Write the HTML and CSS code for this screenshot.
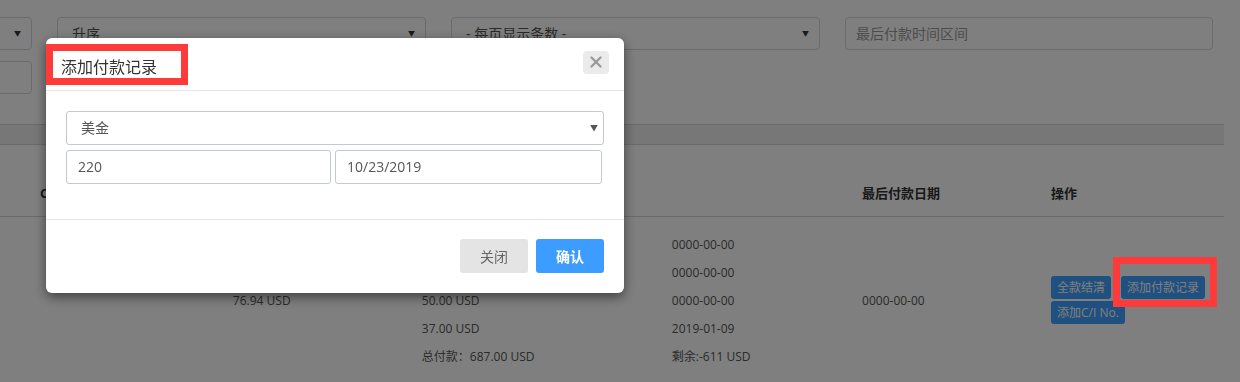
FILE: index.html
```html
<!DOCTYPE html>
<html lang="zh-CN">
<head>
    <meta charset="UTF-8">
    <title>付款记录</title>
    <link rel="stylesheet" href="styles.css">
</head>
<body>
    <div class="page">
        <div class="filters">
            <div class="field select"><span></span><i class="caret">▼</i></div>
            <div class="field select"><span>升序</span><i class="caret">▼</i></div>
            <div class="field select"><span>- 每页显示条数 -</span><i class="caret">▼</i></div>
            <div class="field"><span class="placeholder">最后付款时间区间</span></div>
        </div>
        <div class="filters second">
            <div class="field"></div>
        </div>

        <div class="band"></div>

        <table class="list">
            <thead>
                <tr>
                    <th class="c-first"></th>
                    <th class="c-ci">C/I No.</th>
                    <th class="c-total">合同金额</th>
                    <th class="c-pay">付款记录</th>
                    <th class="c-last">最后付款日期</th>
                    <th class="c-op">操作</th>
                </tr>
            </thead>
            <tbody>
                <tr>
                    <td></td>
                    <td></td>
                    <td>76.94 USD</td>
                    <td>
                        <div class="pays">
                            <span>100.00 USD</span><span>0000-00-00</span>
                            <span>500.00 USD</span><span>0000-00-00</span>
                            <span>50.00 USD</span><span>0000-00-00</span>
                            <span>37.00 USD</span><span>2019-01-09</span>
                            <span>总付款：687.00 USD</span><span>剩余:-611 USD</span>
                        </div>
                    </td>
                    <td>0000-00-00</td>
                    <td>
                        <div class="ops">
                            <button class="btn-xs">全款结清</button>
                            <button class="btn-xs">添加付款记录</button>
                            <button class="btn-xs">添加C/I No.</button>
                        </div>
                    </td>
                </tr>
            </tbody>
        </table>
    </div>

    <div class="backdrop"></div>
    <div class="mark mark-op"></div>

    <div class="modal">
        <div class="modal-header">
            <h4 class="modal-title">添加付款记录</h4>
            <button class="close" aria-label="关闭">
                <svg width="12" height="12" viewBox="0 0 12 12"><path d="M1.5 1.5 L10.5 10.5 M10.5 1.5 L1.5 10.5" stroke="#999" stroke-width="2.2" stroke-linecap="round"/></svg>
            </button>
            <div class="mark mark-title"></div>
        </div>
        <div class="modal-body">
            <div class="input select"><span>美金</span><i class="caret">▼</i></div>
            <div class="input-row">
                <div class="input">220</div>
                <div class="input">10/23/2019</div>
            </div>
        </div>
        <div class="modal-footer">
            <button class="btn btn-default">关闭</button>
            <button class="btn btn-primary">确认</button>
        </div>
    </div>
</body>
</html>
```

FILE: styles.css
```css
body {
    margin: 0;
    font-family: 'Open Sans', 'Noto Sans CJK SC', sans-serif;
    color: #555;
    background: #fff;
    overflow: hidden;
    height: 382px;
}

.page {
    margin-left: -336px;
    width: 1560px;
    padding-top: 17px;
}

.filters {
    display: grid;
    grid-template-columns: 368px 369px 369px 368px;
    column-gap: 25px;
}

.filters.second {
    margin-top: 11px;
}

.field {
    height: 33px;
    box-sizing: border-box;
    border: 1px solid #d2d6de;
    border-radius: 4px;
    padding: 0 14px;
    font-size: 14px;
    line-height: 31px;
    color: #555;
    display: flex;
    justify-content: space-between;
    align-items: center;
}

.field span {
    line-height: 31px;
}

.placeholder {
    color: #999;
    margin-left: -4px;
}

.caret {
    font-style: normal;
    font-size: 7px;
    line-height: 10px;
    color: #333;
    margin-right: -4px;
}

.band {
    margin-top: 30px;
    height: 19px;
    background: #eeeeee;
    border-top: 1px solid #d6d6d6;
    border-bottom: 1px solid #d6d6d6;
}

.list {
    width: 1560px;
    border-collapse: collapse;
    font-size: 12px;
}

.list th {
    text-align: left;
    font-size: 13px;
    color: #333;
    font-weight: bold;
    padding: 38px 8px 13px;
    line-height: 20px;
    border-bottom: 1px solid #d6d6d6;
    white-space: nowrap;
}

.list td {
    padding: 13px 8px;
    vertical-align: middle;
}

.c-first { width: 350px; }
.c-ci { width: 176px; }
.c-total { width: 172px; }
.c-pay { width: 422px; }
.c-last { width: 172px; }
.c-op { width: 172px; }

.list tbody tr td:last-child,
.list thead tr th:last-child {
    padding-right: 0;
}

.pays {
    display: grid;
    grid-template-columns: 250px auto;
    grid-auto-rows: 28px;
    align-items: center;
}

.ops {
    display: flex;
    flex-wrap: wrap;
    gap: 2px 10px;
    width: 172px;
}

.btn-xs {
    font-family: inherit;
    font-size: 12px;
    line-height: 17px;
    padding: 3px 6px;
    border: none;
    border-radius: 3px;
    background: #3ea0ff;
    color: #fff;
}

.backdrop {
    position: fixed;
    inset: 0;
    background: rgba(0, 0, 0, 0.5);
}

.mark {
    position: absolute;
    box-sizing: border-box;
    border: 7px solid #ff3a3a;
}

.mark-op {
    left: 1113px;
    top: 257px;
    width: 104px;
    height: 50px;
}

.mark-title {
    left: 0;
    top: 6px;
    width: 142px;
    height: 41px;
}

.modal {
    position: fixed;
    left: 46px;
    top: 38px;
    width: 578px;
    background: #fff;
    border-radius: 6px;
    box-shadow: 0 4px 12px rgba(0, 0, 0, 0.5);
    color: #555;
}

.modal-header {
    position: relative;
    height: 52px;
    border-bottom: 1px solid #e5e5e5;
    padding: 0 15px;
    display: flex;
    align-items: center;
    justify-content: space-between;
}

.modal-title {
    margin: 4px 0 0;
    font-size: 16px;
    font-weight: normal;
    color: #333;
}

.close {
    width: 26px;
    height: 23px;
    border: none;
    border-radius: 4px;
    background: #ebebeb;
    padding: 0;
    margin-top: -4px;
    display: flex;
    align-items: center;
    justify-content: center;
}

.modal-body {
    padding: 20px 20px 20px;
    font-size: 14px;
}

.input {
    height: 34px;
    box-sizing: border-box;
    border: 1px solid #c3c9d0;
    border-radius: 3px;
    padding: 0 11px;
    line-height: 32px;
    color: #555;
    margin-bottom: 5px;
}

.input.select {
    display: flex;
    justify-content: space-between;
    align-items: center;
    padding-left: 14px;
}

.input.select .caret {
    margin-right: -6px;
    color: #555;
    font-size: 8px;
}

.input-row {
    display: grid;
    grid-template-columns: 265px 267px;
    column-gap: 4px;
}

.input-row .input {
    margin-bottom: 15px;
}

.modal-footer {
    border-top: 1px solid #e5e5e5;
    padding: 19px 20px 20px;
    display: flex;
    justify-content: flex-end;
    gap: 8px;
}

.btn {
    width: 68px;
    height: 34px;
    border: none;
    border-radius: 3px;
    font-family: inherit;
    font-size: 14px;
}

.btn-default {
    background: #e4e4e4;
    color: #666;
}

.btn-primary {
    background: #3d9cff;
    color: #fff;
    font-weight: bold;
}
```
